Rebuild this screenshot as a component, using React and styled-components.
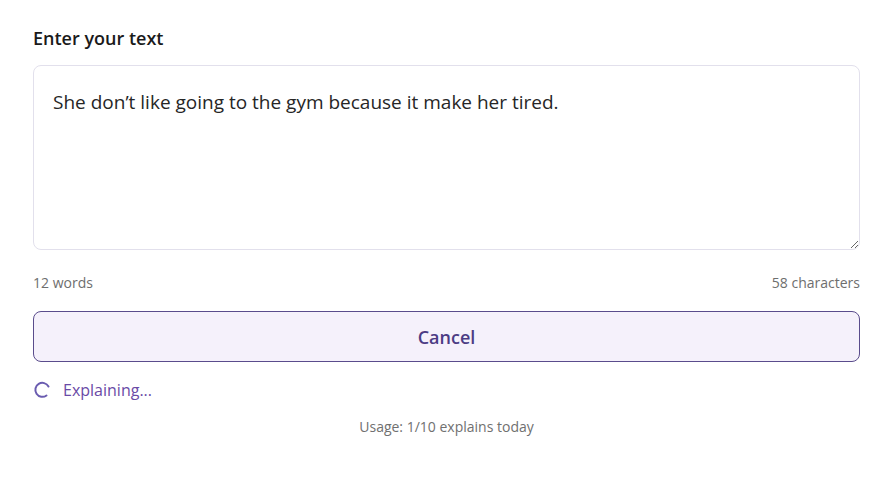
import styled, { createGlobalStyle } from 'styled-components'

const GlobalStyle = createGlobalStyle`
  body {
    margin: 0;
    background: #ffffff;
    font-family: 'Open Sans', 'Noto Sans', sans-serif;
  }
`

const Page = styled.div`
  padding: 26px 28px 0 33px;
  display: flex;
  flex-direction: column;
`

const Label = styled.label`
  font-size: 18px;
  font-weight: 600;
  color: #1a1a1a;
  margin-bottom: 15px;
`

const TextArea = styled.textarea`
  box-sizing: border-box;
  width: 100%;
  height: 185px;
  padding: 23px 19px 22px;
  font-family: inherit;
  font-size: 19px;
  color: #262626;
  border: 1px solid #e2e0ec;
  border-radius: 8px;
  resize: vertical;
  outline: none;
`

const Counts = styled.div`
  display: flex;
  justify-content: space-between;
  margin-top: 23px;
  font-size: 14px;
  color: #6e6e6e;
`

const Button = styled.button`
  margin-top: 19px;
  height: 51px;
  border: 1px solid #5a4c8c;
  border-radius: 8px;
  background: #f5f1fb;
  color: #4c3c84;
  font-family: inherit;
  font-size: 18px;
  font-weight: 600;
`

const Status = styled.div`
  display: flex;
  align-items: center;
  gap: 12px;
  margin-top: 17px;
  font-size: 16px;
  color: #6a4aa6;
`

const Spinner = styled.svg`
  width: 18px;
  height: 18px;
`

const Usage = styled.div`
  text-align: center;
  margin-top: 16px;
  font-size: 14px;
  color: #707070;
`

const text = 'She don’t like going to the gym because it make her tired.'

export default function App () {
  return (
    <>
      <GlobalStyle />
      <Page>
        <Label>Enter your text</Label>
        <TextArea defaultValue={text} />
        <Counts>
          <span>12 words</span>
          <span>58 characters</span>
        </Counts>
        <Button>Cancel</Button>
        <Status>
          <Spinner viewBox='0 0 18 18'>
            <path d='M15.5 5.5 A7 7 0 1 0 13.5 14.5' fill='none' stroke='#6a5cb0' strokeWidth='2' strokeLinecap='round' />
          </Spinner>
          <span>Explaining...</span>
        </Status>
        <Usage>Usage: 1/10 explains today</Usage>
      </Page>
    </>
  )
}
